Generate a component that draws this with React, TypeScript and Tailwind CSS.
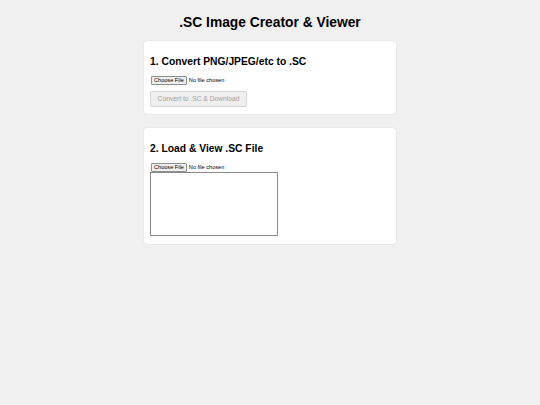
export default function App() {
  return (
    <div className="min-h-[405px] bg-[#f0f0f0] pt-[15px] font-['Liberation_Sans',Arial,sans-serif] text-black">
      <h1 className="text-center text-[13.8px] font-bold leading-[16px]">.SC Image Creator &amp; Viewer</h1>
      <div className="mx-auto mt-[10px] w-[252px] rounded-[4px] bg-white px-[6px] pb-[7px] pt-[14px] shadow-[0_0_2px_rgba(0,0,0,0.1)]">
        <h2 className="pt-[1px] text-[10.3px] font-bold leading-[12px]">1. Convert PNG/JPEG/etc to .SC</h2>
        <div className="mt-[8px] flex h-[9px] items-center gap-[2px] text-[5.6px] leading-[7px]">
          <span className="ml-[1px] flex h-[9px] items-center rounded-[1px] border border-[#8f8f8f] bg-[#efefef] px-[2px]">Choose File</span>
          <span>No file chosen</span>
        </div>
        <div className="mt-[6px] flex h-[16px] w-[97px] items-center justify-center rounded-[2px] border border-[#d6d6d6] bg-[#efefef] text-[6.7px] text-[#a0a0a0]">
          Convert to .SC &amp; Download
        </div>
      </div>
      <div className="mx-auto mt-[14px] w-[252px] rounded-[4px] bg-white px-[6px] pb-[8px] pt-[14px] shadow-[0_0_2px_rgba(0,0,0,0.1)]">
        <h2 className="pt-[1px] text-[10.3px] font-bold leading-[12px]">2. Load &amp; View .SC File</h2>
        <div className="mt-[8px] flex h-[9px] items-center gap-[2px] text-[5.6px] leading-[7px]">
          <span className="ml-[1px] flex h-[9px] items-center rounded-[1px] border border-[#8f8f8f] bg-[#efefef] px-[2px]">Choose File</span>
          <span>No file chosen</span>
        </div>
        <div className="h-[64px] w-[128px] border border-[#8a8a8a]" />
      </div>
    </div>
  );
}
